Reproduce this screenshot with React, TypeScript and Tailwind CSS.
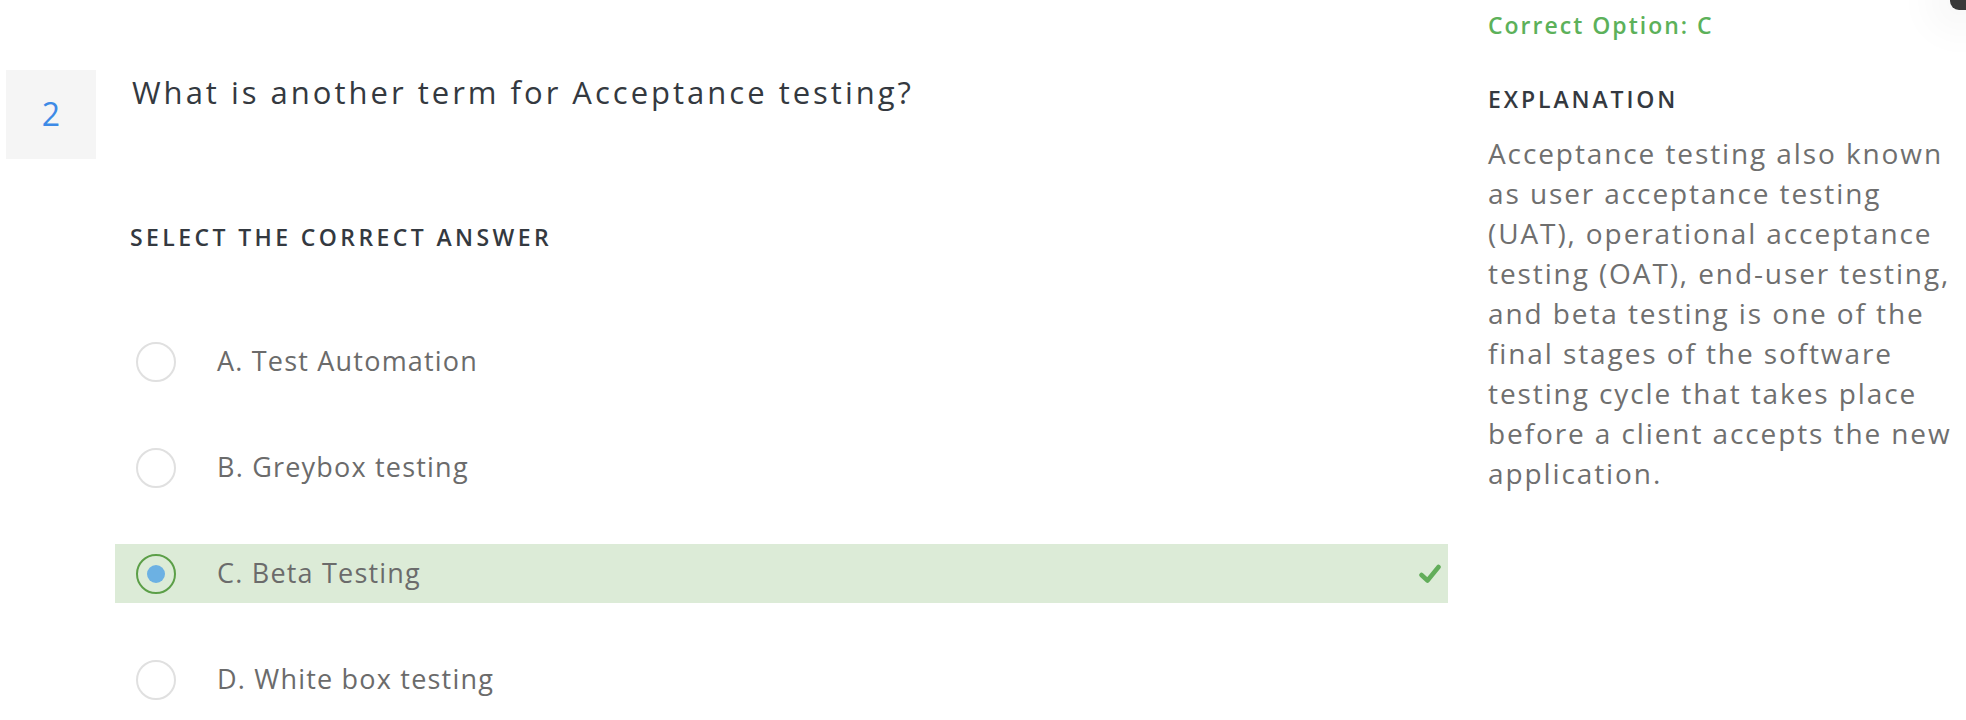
import { useState } from "react";

type Option = { key: string; label: string };

const options: Option[] = [
  { key: "A", label: "Test Automation" },
  { key: "B", label: "Greybox testing" },
  { key: "C", label: "Beta Testing" },
  { key: "D", label: "White box testing" },
];

const correct = "C";

// Kept as the lines the panel shows them, so the wrap stays put with a substitute font.
const explanation = [
  "Acceptance testing also known",
  "as user acceptance testing",
  "(UAT), operational acceptance",
  "testing (OAT), end-user testing,",
  "and beta testing is one of the",
  "final stages of the software",
  "testing cycle that takes place",
  "before a client accepts the new",
  "application.",
];

function Radio({ checked }: { checked: boolean }) {
  return (
    <span
      className={`flex h-[40px] w-[40px] shrink-0 items-center justify-center rounded-full border-2 ${
        checked ? "border-[#5c9f48]" : "border-[#e0e0e0]"
      }`}
    >
      {checked && <span className="h-[18px] w-[18px] rounded-full bg-[#6cb1e3]" />}
    </span>
  );
}

function OptionRow({ option, selected }: { option: Option; selected: boolean }) {
  let isCorrect = selected && option.key === correct;
  return (
    <li
      className={`flex h-[59px] items-center pl-[21px] pr-[6px] ${
        isCorrect ? "bg-[#dcebd7]" : ""
      }`}
    >
      <Radio checked={selected} />
      <span className="ml-[41px] flex-1 text-[27px] tracking-[1.2px] text-[#6b6b6b]">
        {option.key}. {option.label}
      </span>
      {isCorrect && (
        <svg width="22" height="20" viewBox="0 0 22 20" aria-hidden className="mr-[1px]">
          <path
            d="M2.5 11 L8.5 16.5 L19.5 3"
            fill="none"
            stroke="#62ad5a"
            strokeWidth="4.5"
            strokeLinecap="round"
            strokeLinejoin="round"
          />
        </svg>
      )}
    </li>
  );
}

export default function App() {
  let [selected] = useState("C");

  return (
    <div className="relative h-[720px] w-[1966px] overflow-hidden bg-white font-['Open_Sans',sans-serif]">
      {/* corner of the window chrome peeking in at the top right */}
      <div className="absolute right-0 top-0 h-[10px] w-[16px] rounded-bl-[9px] bg-[#3a3a3a] shadow-[0_0_40px_20px_rgba(0,0,0,0.04)]" />

      <div className="flex">
        <div className="w-[1448px] shrink-0 pt-[70px]">
          <div className="flex">
            <div className="ml-[6px] flex h-[89px] w-[90px] shrink-0 items-center justify-center bg-[#f5f5f5] pb-[2px] text-[32px] text-[#3d8ae6]">
              2
            </div>
            <div className="ml-[36px]">
              <h2 className="mt-[4px] text-[31px] leading-[36px] tracking-[3px] text-[#343940]">
                What is another term for Acceptance testing?
              </h2>
              <p className="ml-[-2px] mt-[115px] text-[23px] font-semibold leading-[24px] tracking-[3.4px] text-[#343940]">
                SELECT THE CORRECT ANSWER
              </p>
            </div>
          </div>

          <ul className="ml-[115px] mt-[83px] flex flex-col gap-[47px]">
            {options.map((option) => (
              <OptionRow key={option.key} option={option} selected={selected === option.key} />
            ))}
          </ul>
        </div>

        <aside className="ml-[40px] w-[478px] pt-[12px]">
          <p className="text-[23px] font-semibold leading-[26px] tracking-[2px] text-[#5cb15a]">
            Correct Option: C
          </p>
          <h3 className="mt-[48px] text-[23px] font-semibold leading-[26px] tracking-[2.9px] text-[#343940]">
            EXPLANATION
          </h3>
          <p className="mt-[21px] text-[28px] leading-[40px] tracking-[1.9px] text-[#6f6f6f]">
            {explanation.map((line) => (
              <span key={line} className="block whitespace-nowrap">
                {line}
              </span>
            ))}
          </p>
        </aside>
      </div>
    </div>
  );
}
